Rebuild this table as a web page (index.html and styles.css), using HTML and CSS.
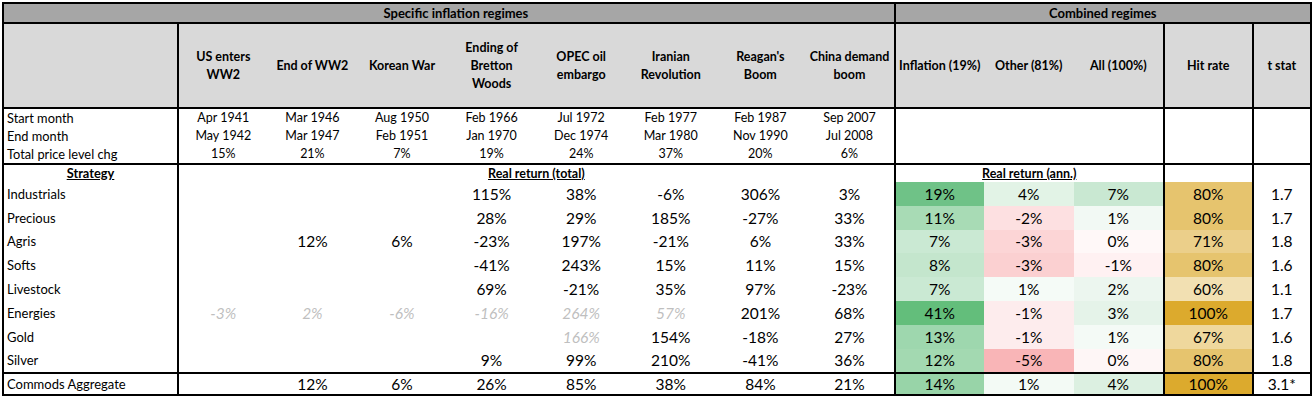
FILE: index.html
```html
<!DOCTYPE html>
<html>
<head>
<meta charset="utf-8">
<link rel="stylesheet" href="styles.css">
</head>
<body>
<table class="grid">
  <colgroup>
    <col class="c-label">
    <col class="c-ev"><col class="c-ev"><col class="c-ev"><col class="c-ev">
    <col class="c-ev"><col class="c-ev"><col class="c-ev"><col class="c-ev">
    <col class="c-inf"><col class="c-oth"><col class="c-all"><col class="c-hit"><col class="c-t">
  </colgroup>
  <tr class="r-group">
    <th colspan="9" class="group shift">Specific inflation regimes</th>
    <th colspan="5" class="group sep">Combined regimes</th>
  </tr>
  <tr class="r-head">
    <th class="head"></th>
    <th class="head sep">US enters<br>WW2</th>
    <th class="head">End of WW2</th>
    <th class="head">Korean War</th>
    <th class="head">Ending of<br>Bretton<br>Woods</th>
    <th class="head">OPEC oil<br>embargo</th>
    <th class="head">Iranian<br>Revolution</th>
    <th class="head">Reagan's<br>Boom</th>
    <th class="head">China demand<br>boom</th>
    <th class="head sep">Inflation (19%)</th>
    <th class="head">Other (81%)</th>
    <th class="head">All (100%)</th>
    <th class="head sep">Hit rate</th>
    <th class="head sep">t stat</th>
  </tr>
  <tr class="r-info first">
    <td class="lbl">Start month</td>
    <td class="info sep">Apr 1941</td><td class="info">Mar 1946</td><td class="info">Aug 1950</td><td class="info">Feb 1966</td>
    <td class="info">Jul 1972</td><td class="info">Feb 1977</td><td class="info">Feb 1987</td><td class="info">Sep 2007</td>
    <td class="sep" colspan="3" rowspan="3"></td>
    <td class="sep" rowspan="3"></td>
    <td class="sep" rowspan="3"></td>
  </tr>
  <tr class="r-info">
    <td class="lbl">End month</td>
    <td class="info sep">May 1942</td><td class="info">Mar 1947</td><td class="info">Feb 1951</td><td class="info">Jan 1970</td>
    <td class="info">Dec 1974</td><td class="info">Mar 1980</td><td class="info">Nov 1990</td><td class="info">Jul 2008</td>
  </tr>
  <tr class="r-info">
    <td class="lbl">Total price level chg</td>
    <td class="info sep">15%</td><td class="info">21%</td><td class="info">7%</td><td class="info">19%</td>
    <td class="info">24%</td><td class="info">37%</td><td class="info">20%</td><td class="info">6%</td>
  </tr>
  <tr class="r-strat">
    <td class="lbl strat"><span class="ul">Strategy</span></td>
    <td class="sub sep" colspan="8"><span class="ul">Real return (total)</span></td>
    <td class="sub sep" colspan="3"><span class="ul">Real return (ann.)</span></td>
    <td class="sep"></td>
    <td class="sep"></td>
  </tr>
  <tr class="r-data">
    <td class="lbl">Industrials</td>
    <td class="v sep"></td><td class="v"></td><td class="v"></td><td class="v">115%</td><td class="v">38%</td><td class="v">-6%</td><td class="v">306%</td><td class="v">3%</td>
    <td class="v sep" style="background:#6fc287">19%</td><td class="v" style="background:#e2f3e6">4%</td><td class="v" style="background:#c9e8d2">7%</td>
    <td class="v sep" style="background:#e6c46e">80%</td><td class="v sep">1.7</td>
  </tr>
  <tr class="r-data">
    <td class="lbl">Precious</td>
    <td class="v sep"></td><td class="v"></td><td class="v"></td><td class="v">28%</td><td class="v">29%</td><td class="v">185%</td><td class="v">-27%</td><td class="v">33%</td>
    <td class="v sep" style="background:#a8dbb5">11%</td><td class="v" style="background:#fde0e1">-2%</td><td class="v" style="background:#f2f9f4">1%</td>
    <td class="v sep" style="background:#e6c46e">80%</td><td class="v sep">1.7</td>
  </tr>
  <tr class="r-data">
    <td class="lbl">Agris</td>
    <td class="v sep"></td><td class="v">12%</td><td class="v">6%</td><td class="v">-23%</td><td class="v">197%</td><td class="v">-21%</td><td class="v">6%</td><td class="v">33%</td>
    <td class="v sep" style="background:#cae9d3">7%</td><td class="v" style="background:#fcd5d6">-3%</td><td class="v" style="background:#fff8f8">0%</td>
    <td class="v sep" style="background:#ebcf8a">71%</td><td class="v sep">1.8</td>
  </tr>
  <tr class="r-data">
    <td class="lbl">Softs</td>
    <td class="v sep"></td><td class="v"></td><td class="v"></td><td class="v">-41%</td><td class="v">243%</td><td class="v">15%</td><td class="v">11%</td><td class="v">15%</td>
    <td class="v sep" style="background:#c4e6cd">8%</td><td class="v" style="background:#fbd0d1">-3%</td><td class="v" style="background:#fff1f2">-1%</td>
    <td class="v sep" style="background:#e6c46e">80%</td><td class="v sep">1.6</td>
  </tr>
  <tr class="r-data">
    <td class="lbl">Livestock</td>
    <td class="v sep"></td><td class="v"></td><td class="v"></td><td class="v">69%</td><td class="v">-21%</td><td class="v">35%</td><td class="v">97%</td><td class="v">-23%</td>
    <td class="v sep" style="background:#cae9d3">7%</td><td class="v" style="background:#f5fbf7">1%</td><td class="v" style="background:#ecf6ef">2%</td>
    <td class="v sep" style="background:#f2e0b2">60%</td><td class="v sep">1.1</td>
  </tr>
  <tr class="r-data">
    <td class="lbl">Energies</td>
    <td class="v sep dim">-3%</td><td class="v dim">2%</td><td class="v dim">-6%</td><td class="v dim">-16%</td><td class="v dim">264%</td><td class="v dim">57%</td><td class="v">201%</td><td class="v">68%</td>
    <td class="v sep" style="background:#63be7b">41%</td><td class="v" style="background:#fdeced">-1%</td><td class="v" style="background:#e5f3e9">3%</td>
    <td class="v sep" style="background:#dcaa2d">100%</td><td class="v sep">1.7</td>
  </tr>
  <tr class="r-data">
    <td class="lbl">Gold</td>
    <td class="v sep"></td><td class="v"></td><td class="v"></td><td class="v"></td><td class="v dim">166%</td><td class="v">154%</td><td class="v">-18%</td><td class="v">27%</td>
    <td class="v sep" style="background:#9ed7ae">13%</td><td class="v" style="background:#fdeced">-1%</td><td class="v" style="background:#f4faf6">1%</td>
    <td class="v sep" style="background:#efd89d">67%</td><td class="v sep">1.6</td>
  </tr>
  <tr class="r-data">
    <td class="lbl">Silver</td>
    <td class="v sep"></td><td class="v"></td><td class="v"></td><td class="v">9%</td><td class="v">99%</td><td class="v">210%</td><td class="v">-41%</td><td class="v">36%</td>
    <td class="v sep" style="background:#a3d9b1">12%</td><td class="v" style="background:#f9b5b7">-5%</td><td class="v" style="background:#fef6f6">0%</td>
    <td class="v sep" style="background:#e6c46e">80%</td><td class="v sep">1.8</td>
  </tr>
  <tr class="r-agg">
    <td class="lbl">Commods Aggregate</td>
    <td class="v sep"></td><td class="v">12%</td><td class="v">6%</td><td class="v">26%</td><td class="v">85%</td><td class="v">38%</td><td class="v">84%</td><td class="v">21%</td>
    <td class="v sep" style="background:#98d4a8">14%</td><td class="v" style="background:#f3faf5">1%</td><td class="v" style="background:#dcf0e1">4%</td>
    <td class="v sep" style="background:#dcaa2d">100%</td><td class="v sep">3.1*</td>
  </tr>
</table>
</body>
</html>
```
FILE: styles.css
```css
html, body {
  margin: 0;
  padding: 0;
  background: #ffffff;
}
body {
  padding: 2px 0 0 2px;
  font-family: Lato, "Liberation Sans", sans-serif;
  color: #000;
}
.grid {
  border-collapse: collapse;
  table-layout: fixed;
  width: 1309px;
  border: 2px solid #000;
}
.c-label { width: 175px; }
.c-ev { width: 89.6px; }
.c-inf { width: 89px; }
.c-oth { width: 90px; }
.c-all { width: 90px; }
.c-hit { width: 89px; }
.c-t { width: 58px; }

th, td {
  padding: 0;
  white-space: nowrap;
  overflow: visible;
}
.sep { border-left: 2px solid #000; }

.r-group th {
  height: 18px;
  background: #a6a6a6;
  font-size: 13px;
  font-weight: 700;
  text-align: center;
  border-bottom: 2px solid #000;
  line-height: 18px;
}
.r-group .shift { padding-left: 14px; }
.r-head th {
  height: 83px;
  background: #d9d9d9;
  font-size: 12.5px;
  font-weight: 700;
  line-height: 18px;
  text-align: center;
  vertical-align: middle;
  border-bottom: 2px solid #000;
}
.r-info td {
  height: 18px;
  font-size: 12.5px;
  line-height: 18px;
}
.info { text-align: center; }
.lbl {
  font-size: 13px;
  text-align: left;
  padding-left: 3px;
}
.r-info td.lbl { font-size: 12.8px; }
.r-strat td {
  height: 16px;
  border-top: 2px solid #000;
  font-size: 12.5px;
  font-weight: 700;
  line-height: 17px;
  text-align: center;
  vertical-align: top;
}
.r-strat .strat { text-align: center; padding-left: 0; font-size: 12.8px; }
.ul { text-decoration: underline; }
.r-data td {
  height: 23.8px;
  font-size: 15.5px;
  line-height: 20px;
  vertical-align: middle;
}
.r-data td.lbl, .r-agg td.lbl { font-size: 13px; }
.r-agg td {
  height: 20px;
  border-top: 2px solid #000;
  font-size: 15.5px;
  vertical-align: middle;
}
.v { text-align: center; }
.dim { color: #bfbfbf; font-style: italic; }
```
